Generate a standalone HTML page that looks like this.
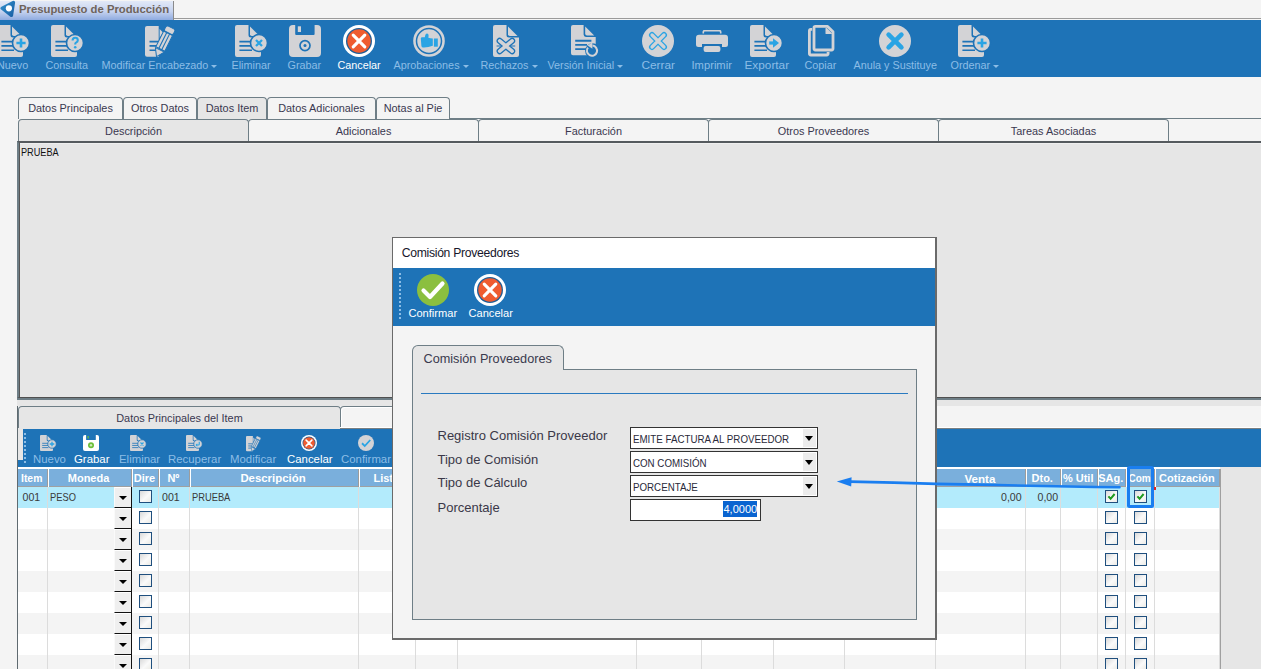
<!DOCTYPE html>
<html><head><meta charset="utf-8">
<style>
*{box-sizing:border-box;margin:0;padding:0}
html,body{width:1261px;height:669px;overflow:hidden;background:#f4f4f4;font-family:"Liberation Sans",sans-serif;position:relative}
.a{position:absolute}
.t{position:absolute;white-space:nowrap;line-height:1}
/* title tab */
#ttab{left:0;top:1px;width:174px;height:19px;background:linear-gradient(#e2e9f7,#c6d3ef 55%,#8fabe0);border-right:1px solid #8a8a8a}
#tstrip{left:174px;top:0;width:1087px;height:19px;background:#f4f4f4;border-bottom:1px solid #9a9a9a}
/* main toolbar */
#tb{left:0;top:20px;width:1261px;height:57px;background:#1e73b7}
.lbl{position:absolute;top:60.3px;font-size:10.8px;color:#8cbde6;white-space:nowrap;line-height:1}
.lbl.w{color:#fff}
.ar{display:inline-block;width:0;height:0;border-left:3px solid transparent;border-right:3px solid transparent;border-top:3px solid #8cbde6;margin-left:3px;vertical-align:1px}
/* tabs */
.tab{position:absolute;border:1px solid #6e7e86;border-bottom:none;border-radius:4px 4px 0 0;background:#f4f4f4;font-size:10.9px;color:#3a3850;text-align:center;line-height:20px;white-space:nowrap}
.tab.act{background:#e6e6e6}
.row{position:absolute;height:21px}
.cl{position:absolute;top:486px;width:1px;height:183px;background:#dedede}
.hd{position:absolute;top:468px;height:18px;background:#7aafdc;color:#fff;font-size:11.4px;line-height:18px;text-align:center;white-space:nowrap;overflow:hidden;border-right:2px solid #f4f4f4}
.cell{position:absolute;font-size:11px;color:#333;line-height:1;white-space:nowrap}
.dd{position:absolute;left:114px;width:17px;height:21px;background:#efefef;border-bottom:1.5px solid #111;border-top:1px solid #fff;border-left:1px solid #fafafa}
.dd:after{content:"";position:absolute;left:3.5px;top:8px;border-left:4px solid transparent;border-right:4px solid transparent;border-top:4px solid #000}
.cap{font-size:10.6px;color:#3a3a3a;transform:scaleX(.88);transform-origin:0 0}
.dig{font-size:10.6px;color:#3a3a3a}
.cap2{font-size:10.6px;color:#2a2a3a;transform:scaleX(.92);transform-origin:0 0}
.cb{position:absolute;width:13px;height:13px;border:1.5px solid #1f4f7e;background:linear-gradient(135deg,#d9d9d9 0%,#fafafa 55%,#ecebe6 100%)}
</style></head><body>

<!-- title -->
<div class="a" id="tstrip"></div>
<div class="a" id="ttab"></div>
<svg class="a" style="left:0;top:0" width="18" height="19" viewBox="0 0 18 19"><defs><linearGradient id="tg" x1="0" y1="0" x2="1" y2="1"><stop offset="0" stop-color="#2f8cc8"/><stop offset="1" stop-color="#1a62a8"/></linearGradient></defs><path d="M2.2 8.2 L13.4 2.6 L11.4 15.4 Z" fill="url(#tg)" stroke="url(#tg)" stroke-width="3.4" stroke-linejoin="round"/><circle cx="8.9" cy="8.3" r="3.1" fill="#fff"/></svg>
<div class="t" style="left:19px;top:3.6px;font-size:11.3px;font-weight:bold;color:#6e635b">Presupuesto de Producción</div>

<!-- toolbar -->
<div class="a" id="tb"></div>
<svg class="a" style="left:-3.1px;top:25px" width="34.00" height="33.00" viewBox="0 0 34 33"><path d="M2 0 H13.5 V10 Q13.5 12.5 16 12.5 H26 V30 Q26 32 24 32 H2 Q0 32 0 30 V2 Q0 0 2 0 Z" fill="#d3d3d6"/><path d="M15 1.5 L24.5 11 H16.8 Q15 11 15 9.2 Z" fill="#d3d3d6"/><path d="M4.4 16.6 H17 M4.4 20.9 H17 M4.4 25.2 H17" stroke="#1e73b7" stroke-width="1.6"/><circle cx="24" cy="18" r="8.5" fill="#d3d3d6" stroke="#1e73b7" stroke-width="1.6"/><path d="M24 13.4 V22.6 M19.4 18 H28.6" stroke="#2aa4e4" stroke-width="2.6"/></svg>
<svg class="a" style="left:51.1px;top:25px" width="34.00" height="33.00" viewBox="0 0 34 33"><path d="M2 0 H13.5 V10 Q13.5 12.5 16 12.5 H26 V30 Q26 32 24 32 H2 Q0 32 0 30 V2 Q0 0 2 0 Z" fill="#d3d3d6"/><path d="M15 1.5 L24.5 11 H16.8 Q15 11 15 9.2 Z" fill="#d3d3d6"/><path d="M4.4 16.6 H17 M4.4 20.9 H17 M4.4 25.2 H17" stroke="#1e73b7" stroke-width="1.6"/><circle cx="24" cy="18" r="8.5" fill="#d3d3d6" stroke="#1e73b7" stroke-width="1.6"/><path d="M21.6 15.6 Q21.6 12.8 24.2 12.8 Q26.8 12.8 26.8 15.2 Q26.8 16.8 25 17.6 Q24.2 18 24.2 19.6" stroke="#2aa4e4" stroke-width="2.1" fill="none"/><circle cx="24.2" cy="22.2" r="1.3" fill="#2aa4e4"/></svg>
<svg class="a" style="left:144.5px;top:26px" width="32.00" height="32.00" viewBox="0 0 32 32"><path d="M2 0 H13.7 V30.7 H2 Q0 30.7 0 28.7 V2 Q0 0 2 0 Z" fill="#d3d3d6"/><path d="M14.6 3 L18 6.4 L14.6 12 Z" fill="#d3d3d6"/><path d="M4.5 15.6 H13.5 M4.5 19.9 H13.5 M4.5 24.2 H13.5" stroke="#1e73b7" stroke-width="1.6"/><g transform="translate(25.6 2.4) rotate(26.6)"><rect x="-5" y="-1" width="10" height="6" rx="2" fill="#d3d3d6" stroke="#1e73b7" stroke-width="1"/><rect x="-5" y="5.6" width="10" height="17.4" fill="#d3d3d6" stroke="#1e73b7" stroke-width="1"/><path d="M-1.6 5.6 V23 M1.6 5.6 V23" stroke="#1e73b7" stroke-width="1.1"/><path d="M-5 24 H5 L0 31.5 Z" fill="#d3d3d6" stroke="#1e73b7" stroke-width="1" stroke-linejoin="round"/></g></svg>
<svg class="a" style="left:235.2px;top:25px" width="34.00" height="33.00" viewBox="0 0 34 33"><path d="M2 0 H13.5 V10 Q13.5 12.5 16 12.5 H26 V30 Q26 32 24 32 H2 Q0 32 0 30 V2 Q0 0 2 0 Z" fill="#d3d3d6"/><path d="M15 1.5 L24.5 11 H16.8 Q15 11 15 9.2 Z" fill="#d3d3d6"/><path d="M4.4 16.6 H17 M4.4 20.9 H17 M4.4 25.2 H17" stroke="#1e73b7" stroke-width="1.6"/><circle cx="24" cy="18" r="8.5" fill="#d3d3d6" stroke="#1e73b7" stroke-width="1.6"/><path d="M21 15 L27 21 M27 15 L21 21" stroke="#2aa4e4" stroke-width="2.3"/></svg>
<svg class="a" style="left:289px;top:25px" width="32.00" height="32.00" viewBox="0 0 32 32"><path d="M4 0 H6.2 V9 Q6.2 10 7.2 10 H24.6 Q25.6 10 25.6 9 V0 H28 Q32 0 32 4 V28 Q32 32 28 32 H4 Q0 32 0 28 V4 Q0 0 4 0 Z" fill="#d3d3d6"/><rect x="8.8" y="1.3" width="3.2" height="5.7" fill="#d3d3d6"/><circle cx="16" cy="20.6" r="5" fill="none" stroke="#1e73b7" stroke-width="1.7"/><circle cx="16" cy="20.6" r="1.5" fill="#1e73b7"/></svg>
<svg class="a" style="left:343px;top:25px" width="32.00" height="32.00" viewBox="0 0 32 32"><circle cx="16" cy="16" r="16" fill="#fff"/><circle cx="16" cy="16" r="13" fill="#1d5e98"/><circle cx="16" cy="16" r="11.7" fill="#ef5c30"/><path d="M10.2 10.2 L21.8 21.8 M21.8 10.2 L10.2 21.8" stroke="#fff" stroke-width="3.1" stroke-linecap="round"/></svg>
<svg class="a" style="left:413px;top:25px" width="32.00" height="32.00" viewBox="0 0 32 32"><circle cx="16" cy="16" r="15.8" fill="#d3d3d6"/><circle cx="16" cy="16" r="12.5" fill="none" stroke="#1e73b7" stroke-width="1.5"/><path d="M7.8 13.6 Q7.8 12.3 9.2 12.3 H11.8 L12.2 10.4 Q12.6 8.6 14 8.6 Q15.6 8.8 15.6 10.6 L15.4 12.8 Q17.2 13.2 19.8 13.6 V20.8 Q15 22.8 10.2 22.6 Q8.6 22.6 8.4 21 Z" fill="#2aa4e4"/><rect x="20.9" y="13.5" width="3.9" height="8.2" fill="#2aa4e4"/></svg>
<svg class="a" style="left:493.4px;top:25px" width="27.00" height="33.00" viewBox="0 0 27 33"><path d="M2 0 H13.5 V10 Q13.5 12.5 16 12.5 H26 V30 Q26 32 24 32 H2 Q0 32 0 30 V2 Q0 0 2 0 Z" fill="#d3d3d6"/><path d="M15 1.5 L24.5 11 H16.8 Q15 11 15 9.2 Z" fill="#d3d3d6"/><path d="M6.7 15.8 L19.1 26.2 M19.1 15.8 L6.7 26.2" stroke="#1e73b7" stroke-width="6.2" stroke-linecap="round"/><path d="M6.7 15.8 L19.1 26.2 M19.1 15.8 L6.7 26.2" stroke="#d3d3d6" stroke-width="3.6" stroke-linecap="round"/><path d="M3.6 21 H8.4 M17.4 21 H22.2" stroke="#1e73b7" stroke-width="1.2"/></svg>
<svg class="a" style="left:571.3px;top:25px" width="30.00" height="34.00" viewBox="0 0 30 34"><path d="M2 0 H12.6 V9.6 Q12.6 12 15 12 H24.7 V28.2 Q24.7 30.2 22.7 30.2 H2 Q0 30.2 0 28.2 V2 Q0 0 2 0 Z" fill="#d3d3d6"/><path d="M14.2 1.6 L23.2 10.6 H16 Q14.2 10.6 14.2 8.8 Z" fill="#d3d3d6"/><path d="M4.2 15.75 H20.4 M4.2 19.9 H16 M4.2 24.2 H16" stroke="#1e73b7" stroke-width="1.8"/><circle cx="21.5" cy="25.7" r="7.4" fill="#1e73b7"/><path d="M16.9 22.6 A5.1 5.1 0 1 0 21.5 20.6" stroke="#d3d3d6" stroke-width="2" fill="none"/><path d="M21.4 17.2 L21.4 23.8 L16.6 20.4 Z" fill="#d3d3d6"/></svg>
<svg class="a" style="left:642px;top:25px" width="32.00" height="32.00" viewBox="0 0 32 32"><circle cx="16" cy="16" r="16" fill="#d3d3d6"/><path d="M10 10 L22 22 M22 10 L10 22" stroke="#2aa4e4" stroke-width="6" stroke-linecap="round"/><path d="M10 10 L22 22 M22 10 L10 22" stroke="#d3d3d6" stroke-width="3.2" stroke-linecap="round"/></svg>
<svg class="a" style="left:696px;top:30px" width="32.00" height="23.00" viewBox="0 0 32 23"><path d="M7.3 3.6 V2 Q7.3 0.6 8.7 0.6 H23.3 Q24.7 0.6 24.7 2 V3.6" stroke="#d3d3d6" stroke-width="1.6" fill="none"/><path d="M3 4.8 H29 Q32 4.8 32 7.8 V14.5 Q32 17 29.5 17 H26 V13.9 H6 V17 H2.5 Q0 17 0 14.5 V7.8 Q0 4.8 3 4.8 Z" fill="#d3d3d6"/><rect x="7.6" y="15.9" width="16.8" height="6.2" rx="2" fill="#d3d3d6"/></svg>
<svg class="a" style="left:749.8px;top:25px" width="34.00" height="33.00" viewBox="0 0 34 33"><path d="M2 0 H13.5 V10 Q13.5 12.5 16 12.5 H26 V30 Q26 32 24 32 H2 Q0 32 0 30 V2 Q0 0 2 0 Z" fill="#d3d3d6"/><path d="M15 1.5 L24.5 11 H16.8 Q15 11 15 9.2 Z" fill="#d3d3d6"/><path d="M4.4 16.6 H17 M4.4 20.9 H17 M4.4 25.2 H17" stroke="#1e73b7" stroke-width="1.6"/><circle cx="24" cy="18" r="8.5" fill="#d3d3d6" stroke="#1e73b7" stroke-width="1.6"/><path d="M19.2 18 H24" stroke="#2aa4e4" stroke-width="3.2"/><path d="M23 13.2 L29 18 L23 22.8 Z" fill="#2aa4e4"/></svg>
<svg class="a" style="left:807.6px;top:25.4px" width="27.00" height="32.00" viewBox="0 0 27 32"><path d="M4.2 4.3 H2.8 Q1.4 4.3 1.4 5.8 V28.6 Q1.4 30 2.8 30 H18.6 Q20.1 30 20.1 28.6 V27" stroke="#d3d3d6" stroke-width="2.8" fill="none"/><path d="M7.4 1.4 H19.6 L25 6.8 V23.6 Q25 25 23.6 25 H7.4 Q6 25 6 23.6 V2.8 Q6 1.4 7.4 1.4 Z" fill="#1e73b7" stroke="#d3d3d6" stroke-width="2.8" stroke-linejoin="round"/><path d="M18.2 3.4 V8.4 H23.2 Z" fill="#d3d3d6" stroke="#d3d3d6" stroke-width="1.4" stroke-linejoin="round"/></svg>
<svg class="a" style="left:878.8px;top:25px" width="32.00" height="32.00" viewBox="0 0 32 32"><circle cx="16" cy="16" r="16" fill="#d3d3d6"/><path d="M9.6 9.6 L22.4 22.4 M22.4 9.6 L9.6 22.4" stroke="#2aa4e4" stroke-width="4.6" stroke-linecap="round"/></svg>
<svg class="a" style="left:958px;top:25px" width="34.00" height="33.00" viewBox="0 0 34 33"><path d="M2 0 H13.5 V10 Q13.5 12.5 16 12.5 H26 V30 Q26 32 24 32 H2 Q0 32 0 30 V2 Q0 0 2 0 Z" fill="#d3d3d6"/><path d="M15 1.5 L24.5 11 H16.8 Q15 11 15 9.2 Z" fill="#d3d3d6"/><path d="M4.4 16.6 H17 M4.4 20.9 H17 M4.4 25.2 H17" stroke="#1e73b7" stroke-width="1.6"/><circle cx="24" cy="18" r="8.5" fill="#d3d3d6" stroke="#1e73b7" stroke-width="1.6"/><path d="M24 13.4 V22.6 M19.4 18 H28.6" stroke="#2aa4e4" stroke-width="2.6"/></svg>
<div class="lbl" style="left:-3px">Nuevo</div>
<div class="lbl" style="left:45.5px">Consulta</div>
<div class="lbl" style="left:101.5px">Modificar Encabezado<i class="ar"></i></div>
<div class="lbl" style="left:231.5px">Eliminar</div>
<div class="lbl" style="left:287.5px">Grabar</div>
<div class="lbl w" style="left:337.5px">Cancelar</div>
<div class="lbl" style="left:393.5px">Aprobaciones<i class="ar"></i></div>
<div class="lbl" style="left:480.5px">Rechazos<i class="ar"></i></div>
<div class="lbl" style="left:547.5px">Versión Inicial<i class="ar"></i></div>
<div class="lbl" style="left:641.5px;font-size:11.8px;top:59.5px">Cerrar</div>
<div class="lbl" style="left:691.5px;font-size:11.2px;top:60px">Imprimir</div>
<div class="lbl" style="left:744.5px;font-size:11.8px;top:59.5px">Exportar</div>
<div class="lbl" style="left:804.5px">Copiar</div>
<div class="lbl" style="left:853.5px">Anula y Sustituye</div>
<div class="lbl" style="left:950.5px">Ordenar<i class="ar"></i></div>

<!-- top tabs -->
<div class="a" style="left:18px;top:118px;width:1243px;height:1px;background:#6e7e86"></div>
<div class="tab" style="left:18px;top:97px;width:105px;height:22px">Datos Principales</div>
<div class="tab" style="left:123px;top:97px;width:74px;height:22px">Otros Datos</div>
<div class="tab act" style="left:197px;top:97px;width:70px;height:22px">Datos Item</div>
<div class="tab" style="left:267px;top:97px;width:109px;height:22px">Datos Adicionales</div>
<div class="tab" style="left:376px;top:97px;width:74px;height:22px">Notas al Pie</div>

<div class="tab act" style="left:18px;top:119px;width:231px;height:23px;line-height:22px">Descripción</div>
<div class="tab" style="left:248px;top:119px;width:231px;height:23px;line-height:22px">Adicionales</div>
<div class="tab" style="left:478px;top:119px;width:231px;height:23px;line-height:22px">Facturación</div>
<div class="tab" style="left:708px;top:119px;width:231px;height:23px;line-height:22px">Otros Proveedores</div>
<div class="tab" style="left:938px;top:119px;width:231px;height:23px;line-height:22px">Tareas Asociadas</div>

<!-- content -->
<div class="a" style="left:17px;top:141px;width:1244px;height:257px;background:#e6e6e6;border-top:2px solid #555a5e;border-left:2px solid #6e7e86;border-bottom:1px solid #505050"></div>
<div class="a" style="left:19px;top:143px;width:1px;height:254px;background:#555"></div>
<div class="a" style="left:20px;top:143px;width:1241px;height:1px;background:#efefef"></div>
<div class="a" style="left:17px;top:398px;width:1244px;height:2px;background:#6e7e86"></div>
<div class="t" style="left:21px;top:147px;font-size:10.6px;color:#111;transform:scaleX(.865);transform-origin:0 0">PRUEBA</div>

<!-- lower area -->
<div class="a" style="left:17px;top:400px;width:1244px;height:6px;background:#e6e6e6"></div>
<div class="tab act" style="left:18px;top:406px;width:323px;height:23px;line-height:23px">Datos Principales del Item</div>
<div class="a" style="left:340px;top:406px;width:323px;height:22px;background:#f4f4f4;border:1px solid #6e7e86;border-bottom:none;border-radius:4px 4px 0 0;box-shadow:inset 1px 1px 0 #fff"></div>
<div class="a" style="left:340px;top:427px;width:921px;height:1px;background:#fff"></div>
<div class="a" style="left:340px;top:428px;width:921px;height:1px;background:#7a7f82"></div>

<div class="a" style="left:23px;top:428.8px;width:1238px;height:38.2px;background:#1e73b7"></div>
<div class="a" style="left:18px;top:428px;width:5px;height:32px;background:#e6e6e6"></div>
<div class="a" style="left:18px;top:459.6px;width:6px;height:7.4px;background:#1e73b7"></div>
<div class="a" style="left:24px;top:433px;width:2px;height:32px;background:repeating-linear-gradient(#8cbde6 0 2px,transparent 2px 4px)"></div>
<svg class="a" style="left:40px;top:435px" width="17.00" height="16.50" viewBox="0 0 34 33"><path d="M2 0 H13.5 V10 Q13.5 12.5 16 12.5 H26 V30 Q26 32 24 32 H2 Q0 32 0 30 V2 Q0 0 2 0 Z" fill="#d3d3d6"/><path d="M15 1.5 L24.5 11 H16.8 Q15 11 15 9.2 Z" fill="#d3d3d6"/><path d="M4.4 16.6 H17 M4.4 20.9 H17 M4.4 25.2 H17" stroke="#1e73b7" stroke-width="1.6"/><circle cx="24" cy="18" r="8.5" fill="#d3d3d6" stroke="#1e73b7" stroke-width="1.6"/><path d="M24 13.4 V22.6 M19.4 18 H28.6" stroke="#2aa4e4" stroke-width="2.6"/></svg>
<svg class="a" style="left:83px;top:435px" width="16.00" height="16.00" viewBox="0 0 32 32"><path d="M4 0 H6.2 V9 Q6.2 10 7.2 10 H24.6 Q25.6 10 25.6 9 V0 H28 Q32 0 32 4 V28 Q32 32 28 32 H4 Q0 32 0 28 V4 Q0 0 4 0 Z" fill="#ffffff"/><rect x="9" y="2" width="2.6" height="5" fill="#6cbf3a"/><circle cx="16" cy="20.6" r="6" fill="#6cbf3a"/><circle cx="16" cy="20.6" r="2.4" fill="#cfe9b8"/></svg>
<svg class="a" style="left:130px;top:435px" width="17.00" height="16.50" viewBox="0 0 34 33"><path d="M2 0 H13.5 V10 Q13.5 12.5 16 12.5 H26 V30 Q26 32 24 32 H2 Q0 32 0 30 V2 Q0 0 2 0 Z" fill="#d3d3d6"/><path d="M15 1.5 L24.5 11 H16.8 Q15 11 15 9.2 Z" fill="#d3d3d6"/><path d="M4.4 16.6 H17 M4.4 20.9 H17 M4.4 25.2 H17" stroke="#1e73b7" stroke-width="1.6"/><circle cx="24" cy="18" r="8.5" fill="#d3d3d6" stroke="#1e73b7" stroke-width="1.6"/><path d="M21 15 L27 21 M27 15 L21 21" stroke="#2aa4e4" stroke-width="2.3"/></svg>
<svg class="a" style="left:186.1px;top:435px" width="17.00" height="16.50" viewBox="0 0 34 33"><path d="M2 0 H13.5 V10 Q13.5 12.5 16 12.5 H26 V30 Q26 32 24 32 H2 Q0 32 0 30 V2 Q0 0 2 0 Z" fill="#d3d3d6"/><path d="M15 1.5 L24.5 11 H16.8 Q15 11 15 9.2 Z" fill="#d3d3d6"/><path d="M4.4 16.6 H17 M4.4 20.9 H17 M4.4 25.2 H17" stroke="#1e73b7" stroke-width="1.6"/><circle cx="24" cy="18" r="8.5" fill="#d3d3d6" stroke="#1e73b7" stroke-width="1.6"/><path d="M26.5 13.5 V18.5 Q26.5 20 25 20 H21" stroke="#2aa4e4" stroke-width="2.2" fill="none"/><path d="M22.5 16.5 L19 20 L22.5 23.5 Z" fill="#2aa4e4"/></svg>
<svg class="a" style="left:246.1px;top:435.5px" width="16.00" height="16.00" viewBox="0 0 32 32"><path d="M2 0 H13.7 V30.7 H2 Q0 30.7 0 28.7 V2 Q0 0 2 0 Z" fill="#d3d3d6"/><path d="M14.6 3 L18 6.4 L14.6 12 Z" fill="#d3d3d6"/><path d="M4.5 15.6 H13.5 M4.5 19.9 H13.5 M4.5 24.2 H13.5" stroke="#1e73b7" stroke-width="1.6"/><g transform="translate(25.6 2.4) rotate(26.6)"><rect x="-5" y="-1" width="10" height="6" rx="2" fill="#d3d3d6" stroke="#1e73b7" stroke-width="1"/><rect x="-5" y="5.6" width="10" height="17.4" fill="#d3d3d6" stroke="#1e73b7" stroke-width="1"/><path d="M-1.6 5.6 V23 M1.6 5.6 V23" stroke="#1e73b7" stroke-width="1.1"/><path d="M-5 24 H5 L0 31.5 Z" fill="#d3d3d6" stroke="#1e73b7" stroke-width="1" stroke-linejoin="round"/></g></svg>
<svg class="a" style="left:301.1px;top:435px" width="16.00" height="16.00" viewBox="0 0 32 32"><circle cx="16" cy="16" r="16" fill="#fff"/><circle cx="16" cy="16" r="13" fill="#1d5e98"/><circle cx="16" cy="16" r="11.7" fill="#ef5c30"/><path d="M10.2 10.2 L21.8 21.8 M21.8 10.2 L10.2 21.8" stroke="#fff" stroke-width="3.1" stroke-linecap="round"/></svg>
<svg class="a" style="left:357.7px;top:435px" width="16.00" height="16.00" viewBox="0 0 32 32"><circle cx="16" cy="16" r="16" fill="#d3d3d6"/><path d="M8 16.5 L13.5 22 L24.5 10" stroke="#2aa4e4" stroke-width="3.6" fill="none"/></svg>
<div class="t" style="left:33px;top:453.6px;font-size:11.4px;color:#8cbde6">Nuevo</div>
<div class="t" style="left:74px;top:453.6px;font-size:11.4px;color:#fff">Grabar</div>
<div class="t" style="left:119px;top:453.6px;font-size:11.4px;color:#8cbde6">Eliminar</div>
<div class="t" style="left:168px;top:453.6px;font-size:11.4px;color:#8cbde6">Recuperar</div>
<div class="t" style="left:230px;top:453.6px;font-size:11.4px;color:#8cbde6">Modificar</div>
<div class="t" style="left:287px;top:453.6px;font-size:11.4px;color:#fff">Cancelar</div>
<div class="t" style="left:341px;top:453.6px;font-size:11.4px;color:#8cbde6">Confirmar</div>

<!-- grid -->
<div class="a" style="left:18px;top:467px;width:1202px;height:202px;background:#fff"></div>
<div class="a" style="left:1220px;top:467px;width:41px;height:202px;background:#e6e6e6"></div>
<div class="a" style="left:18px;top:486.5px;width:1202px;height:21px;background:#b3ebfc"></div>
<div class="a" style="left:18px;top:507.5px;width:1202px;height:21px;background:#ffffff"></div>
<div class="a" style="left:18px;top:528.5px;width:1202px;height:21px;background:#f4f4f4"></div>
<div class="a" style="left:18px;top:549.5px;width:1202px;height:21px;background:#ffffff"></div>
<div class="a" style="left:18px;top:570.5px;width:1202px;height:21px;background:#f4f4f4"></div>
<div class="a" style="left:18px;top:591.5px;width:1202px;height:21px;background:#ffffff"></div>
<div class="a" style="left:18px;top:612.5px;width:1202px;height:21px;background:#f4f4f4"></div>
<div class="a" style="left:18px;top:633.5px;width:1202px;height:21px;background:#ffffff"></div>
<div class="a" style="left:18px;top:654.5px;width:1202px;height:21px;background:#f4f4f4"></div>
<div class="a" style="left:46.5px;top:486px;width:1px;height:183px;background:#dcdcdc"></div>
<div class="a" style="left:130.6px;top:486px;width:1px;height:183px;background:#dcdcdc"></div>
<div class="a" style="left:158.3px;top:486px;width:1px;height:183px;background:#dcdcdc"></div>
<div class="a" style="left:188.5px;top:486px;width:1px;height:183px;background:#dcdcdc"></div>
<div class="a" style="left:357.5px;top:486px;width:1px;height:183px;background:#dcdcdc"></div>
<div class="a" style="left:415.1px;top:486px;width:1px;height:183px;background:#dcdcdc"></div>
<div class="a" style="left:456.5px;top:486px;width:1px;height:183px;background:#dcdcdc"></div>
<div class="a" style="left:635.5px;top:486px;width:1px;height:183px;background:#dcdcdc"></div>
<div class="a" style="left:700.7px;top:486px;width:1px;height:183px;background:#dcdcdc"></div>
<div class="a" style="left:772.6px;top:486px;width:1px;height:183px;background:#dcdcdc"></div>
<div class="a" style="left:844.4px;top:486px;width:1px;height:183px;background:#dcdcdc"></div>
<div class="a" style="left:935.0px;top:486px;width:1px;height:183px;background:#dcdcdc"></div>
<div class="a" style="left:1024.8px;top:486px;width:1px;height:183px;background:#dcdcdc"></div>
<div class="a" style="left:1059.7px;top:486px;width:1px;height:183px;background:#dcdcdc"></div>
<div class="a" style="left:1096.7px;top:486px;width:1px;height:183px;background:#dcdcdc"></div>
<div class="a" style="left:1124.8px;top:486px;width:1px;height:183px;background:#dcdcdc"></div>
<div class="a" style="left:1154.4px;top:486px;width:1px;height:183px;background:#dcdcdc"></div>
<div class="a" style="left:1219.4px;top:486px;width:1px;height:183px;background:#dcdcdc"></div>
<div class="a" style="left:18px;top:469px;width:1202px;height:17.5px;background:#7aafdc"></div>
<div class="a" style="left:18px;top:486px;width:1202px;height:1px;background:#a0a0a0"></div>
<div class="a" style="left:46.5px;top:469px;width:1px;height:17.5px;background:#9c9c9c"></div>
<div class="a" style="left:47.5px;top:469px;width:1px;height:17.5px;background:#ffffff"></div>
<div class="t" style="left:18.0px;top:473.8px;width:27.5px;padding-left:3px;text-align:left;font-size:10.4px;font-weight:bold;color:#fff;overflow:hidden">Item</div>
<div class="a" style="left:130.6px;top:469px;width:1px;height:17.5px;background:#9c9c9c"></div>
<div class="a" style="left:131.6px;top:469px;width:1px;height:17.5px;background:#ffffff"></div>
<div class="t" style="left:47.5px;top:473px;width:82.1px;text-align:center;font-size:11px;font-weight:bold;color:#fff;overflow:hidden">Moneda</div>
<div class="a" style="left:158.3px;top:469px;width:1px;height:17.5px;background:#9c9c9c"></div>
<div class="a" style="left:159.3px;top:469px;width:1px;height:17.5px;background:#ffffff"></div>
<div class="t" style="left:131.6px;top:473px;width:25.7px;text-align:center;font-size:11px;font-weight:bold;color:#fff;overflow:hidden">Dire</div>
<div class="a" style="left:188.5px;top:469px;width:1px;height:17.5px;background:#9c9c9c"></div>
<div class="a" style="left:189.5px;top:469px;width:1px;height:17.5px;background:#ffffff"></div>
<div class="t" style="left:159.3px;top:473px;width:28.2px;text-align:center;font-size:11px;font-weight:bold;color:#fff;overflow:hidden">Nº</div>
<div class="a" style="left:357.5px;top:469px;width:1px;height:17.5px;background:#9c9c9c"></div>
<div class="a" style="left:358.5px;top:469px;width:1px;height:17.5px;background:#ffffff"></div>
<div class="t" style="left:189.5px;top:473px;width:167.0px;text-align:center;font-size:11.4px;font-weight:bold;color:#fff;overflow:hidden">Descripción</div>
<div class="a" style="left:415.1px;top:469px;width:1px;height:17.5px;background:#9c9c9c"></div>
<div class="a" style="left:416.1px;top:469px;width:1px;height:17.5px;background:#ffffff"></div>
<div class="t" style="left:358.5px;top:473px;width:55.6px;text-align:center;font-size:11px;font-weight:bold;color:#fff;overflow:hidden">Lista</div>
<div class="a" style="left:456.5px;top:469px;width:1px;height:17.5px;background:#9c9c9c"></div>
<div class="a" style="left:457.5px;top:469px;width:1px;height:17.5px;background:#ffffff"></div>
<div class="a" style="left:635.5px;top:469px;width:1px;height:17.5px;background:#9c9c9c"></div>
<div class="a" style="left:636.5px;top:469px;width:1px;height:17.5px;background:#ffffff"></div>
<div class="a" style="left:700.7px;top:469px;width:1px;height:17.5px;background:#9c9c9c"></div>
<div class="a" style="left:701.7px;top:469px;width:1px;height:17.5px;background:#ffffff"></div>
<div class="a" style="left:772.6px;top:469px;width:1px;height:17.5px;background:#9c9c9c"></div>
<div class="a" style="left:773.6px;top:469px;width:1px;height:17.5px;background:#ffffff"></div>
<div class="a" style="left:844.4px;top:469px;width:1px;height:17.5px;background:#9c9c9c"></div>
<div class="a" style="left:845.4px;top:469px;width:1px;height:17.5px;background:#ffffff"></div>
<div class="a" style="left:935.0px;top:469px;width:1px;height:17.5px;background:#9c9c9c"></div>
<div class="a" style="left:936.0px;top:469px;width:1px;height:17.5px;background:#ffffff"></div>
<div class="a" style="left:1024.8px;top:469px;width:1px;height:17.5px;background:#9c9c9c"></div>
<div class="a" style="left:1025.8px;top:469px;width:1px;height:17.5px;background:#ffffff"></div>
<div class="t" style="left:936.0px;top:473px;width:87.8px;text-align:center;font-size:11.6px;font-weight:bold;color:#fff;overflow:hidden">Venta</div>
<div class="a" style="left:1059.7px;top:469px;width:1px;height:17.5px;background:#9c9c9c"></div>
<div class="a" style="left:1060.7px;top:469px;width:1px;height:17.5px;background:#ffffff"></div>
<div class="t" style="left:1025.8px;top:473px;width:32.9px;text-align:center;font-size:11px;font-weight:bold;color:#fff;overflow:hidden">Dto.</div>
<div class="a" style="left:1096.7px;top:469px;width:1px;height:17.5px;background:#9c9c9c"></div>
<div class="a" style="left:1097.7px;top:469px;width:1px;height:17.5px;background:#ffffff"></div>
<div class="t" style="left:1060.7px;top:473px;width:35.0px;text-align:center;font-size:11px;font-weight:bold;color:#fff;overflow:hidden">% Util</div>
<div class="a" style="left:1124.8px;top:469px;width:1px;height:17.5px;background:#9c9c9c"></div>
<div class="a" style="left:1125.8px;top:469px;width:1px;height:17.5px;background:#ffffff"></div>
<div class="t" style="left:1097.7px;top:473px;width:26.1px;text-align:center;font-size:11px;font-weight:bold;color:#fff;overflow:hidden">SAg.</div>
<div class="a" style="left:1154.4px;top:469px;width:1px;height:17.5px;background:#9c9c9c"></div>
<div class="a" style="left:1155.4px;top:469px;width:1px;height:17.5px;background:#ffffff"></div>
<div class="t" style="left:1125.8px;top:473.8px;width:27.6px;text-align:center;font-size:10px;font-weight:bold;color:#fff;overflow:hidden">Com</div>
<div class="a" style="left:1219.4px;top:469px;width:1px;height:17.5px;background:#9c9c9c"></div>
<div class="a" style="left:1220.4px;top:469px;width:1px;height:17.5px;background:#ffffff"></div>
<div class="t" style="left:1155.4px;top:473px;width:63.0px;text-align:center;font-size:11px;font-weight:bold;color:#fff;overflow:hidden">Cotización</div>
<div class="a" style="left:1220px;top:468.5px;width:1px;height:201px;background:#a0a0a0"></div>
<div class="a" style="left:130.8px;top:486.5px;width:1.2px;height:183px;background:#111"></div>
<div class="a" style="left:17px;top:406px;width:1px;height:263px;background:#5f6a70"></div>
<div class="dd" style="top:486.5px"></div>
<div class="cb" style="left:139px;top:490.0px"></div>
<div class="cb" style="left:1105px;top:490.0px"></div>
<div class="cb" style="left:1134px;top:490.0px"></div>
<div class="dd" style="top:507.5px"></div>
<div class="cb" style="left:139px;top:511.0px"></div>
<div class="cb" style="left:1105px;top:511.0px"></div>
<div class="cb" style="left:1134px;top:511.0px"></div>
<div class="dd" style="top:528.5px"></div>
<div class="cb" style="left:139px;top:532.0px"></div>
<div class="cb" style="left:1105px;top:532.0px"></div>
<div class="cb" style="left:1134px;top:532.0px"></div>
<div class="dd" style="top:549.5px"></div>
<div class="cb" style="left:139px;top:553.0px"></div>
<div class="cb" style="left:1105px;top:553.0px"></div>
<div class="cb" style="left:1134px;top:553.0px"></div>
<div class="dd" style="top:570.5px"></div>
<div class="cb" style="left:139px;top:574.0px"></div>
<div class="cb" style="left:1105px;top:574.0px"></div>
<div class="cb" style="left:1134px;top:574.0px"></div>
<div class="dd" style="top:591.5px"></div>
<div class="cb" style="left:139px;top:595.0px"></div>
<div class="cb" style="left:1105px;top:595.0px"></div>
<div class="cb" style="left:1134px;top:595.0px"></div>
<div class="dd" style="top:612.5px"></div>
<div class="cb" style="left:139px;top:616.0px"></div>
<div class="cb" style="left:1105px;top:616.0px"></div>
<div class="cb" style="left:1134px;top:616.0px"></div>
<div class="dd" style="top:633.5px"></div>
<div class="cb" style="left:139px;top:637.0px"></div>
<div class="cb" style="left:1105px;top:637.0px"></div>
<div class="cb" style="left:1134px;top:637.0px"></div>
<div class="dd" style="top:654.5px"></div>
<div class="cb" style="left:139px;top:658.0px"></div>
<div class="cb" style="left:1105px;top:658.0px"></div>
<div class="cb" style="left:1134px;top:658.0px"></div>
<div class="t dig" style="left:22.5px;top:492px">001</div>
<div class="t cap" style="left:50px;top:492px">PESO</div>
<div class="t dig" style="left:162px;top:492px">001</div>
<div class="t cap" style="left:192px;top:492px">PRUEBA</div>
<div class="t dig" style="left:1001px;top:492px">0,00</div>
<div class="t dig" style="left:1037.5px;top:492px">0,00</div>
<svg class="a" style="left:1105px;top:490px" width="13" height="13"><path d="M3.4 6.4 L5.6 8.8 L9.6 4" stroke="#1f9a1f" stroke-width="2" fill="none"/></svg>
<svg class="a" style="left:1134px;top:490px" width="13" height="13"><path d="M3.4 6.4 L5.6 8.8 L9.6 4" stroke="#1f9a1f" stroke-width="2" fill="none"/></svg>
<div class="a" style="left:392px;top:237px;width:545px;height:403px;background:#f4f4f4;border:1px solid #6a6a6a;border-right:2px solid #6a6a6a;border-bottom:2px solid #6a6a6a"></div>
<div class="a" style="left:393px;top:238px;width:542px;height:30px;background:#fff"></div>
<div class="t" style="left:401.7px;top:246.6px;font-size:12.2px;letter-spacing:-0.3px;color:#16162a">Comisión Proveedores</div>
<div class="a" style="left:393px;top:268px;width:542px;height:58px;background:#1e73b7"></div>
<div class="a" style="left:399px;top:273px;width:2px;height:46px;background:repeating-linear-gradient(#8cbde6 0 2px,transparent 2px 4px)"></div>
<svg class="a" style="left:417px;top:274px" width="32" height="32" viewBox="0 0 32 32"><circle cx="16" cy="16" r="16" fill="#8bbf3f"/><path d="M6.5 16.5 L13 23 L25.5 9.5" stroke="#fff" stroke-width="4.2" fill="none" stroke-linecap="round" stroke-linejoin="round"/></svg>
<svg class="a" style="left:474px;top:274px" width="32.00" height="32.00" viewBox="0 0 32 32"><circle cx="16" cy="16" r="16" fill="#fff"/><circle cx="16" cy="16" r="13" fill="#1d5e98"/><circle cx="16" cy="16" r="11.7" fill="#ef5c30"/><path d="M10.2 10.2 L21.8 21.8 M21.8 10.2 L10.2 21.8" stroke="#fff" stroke-width="3.1" stroke-linecap="round"/></svg>
<div class="t" style="left:408.4px;top:308px;font-size:11.1px;color:#fff">Confirmar</div>
<div class="t" style="left:468.5px;top:308px;font-size:11.1px;color:#fff">Cancelar</div>
<div class="a" style="left:412px;top:369px;width:505px;height:251px;background:#e6e6e6;border:1px solid #6e7e86"></div>
<div class="a" style="left:412px;top:345px;width:152px;height:25px;background:#e6e6e6;border:1px solid #6e7e86;border-bottom:none;border-radius:6px 6px 0 0"></div>
<div class="t" style="left:423.5px;top:353px;font-size:12.7px;color:#3a3a4e">Comisión Proveedores</div>
<div class="a" style="left:421px;top:393px;width:487px;height:1px;background:#2a7ac0"></div>
<div class="t" style="left:437.5px;top:429.1px;font-size:13px;color:#3a3848">Registro Comisión Proveedor</div>
<div class="t" style="left:437.5px;top:452.6px;font-size:13px;color:#3a3848">Tipo de Comisión</div>
<div class="t" style="left:437.5px;top:476.4px;font-size:13px;color:#3a3848">Tipo de Cálculo</div>
<div class="t" style="left:437.5px;top:500.7px;font-size:13px;color:#3a3848">Porcentaje</div>
<div class="a" style="left:630px;top:427px;width:188px;height:22px;background:#fff;border:1.5px solid #333"></div>
<div class="a" style="left:803px;top:429px;width:13px;height:18px;background:#ececec"></div>
<div class="a" style="left:805px;top:435.5px;border-left:4.5px solid transparent;border-right:4.5px solid transparent;border-top:5px solid #000;width:0;height:0"></div>
<div class="t cap2" style="left:633.3px;top:434px">EMITE FACTURA AL PROVEEDOR</div>
<div class="a" style="left:630px;top:451px;width:188px;height:22px;background:#fff;border:1.5px solid #333"></div>
<div class="a" style="left:803px;top:453px;width:13px;height:18px;background:#ececec"></div>
<div class="a" style="left:805px;top:459.5px;border-left:4.5px solid transparent;border-right:4.5px solid transparent;border-top:5px solid #000;width:0;height:0"></div>
<div class="t cap2" style="left:633.3px;top:458px">CON COMISIÓN</div>
<div class="a" style="left:630px;top:475px;width:188px;height:22px;background:#fff;border:1.5px solid #333"></div>
<div class="a" style="left:803px;top:477px;width:13px;height:18px;background:#ececec"></div>
<div class="a" style="left:805px;top:483.5px;border-left:4.5px solid transparent;border-right:4.5px solid transparent;border-top:5px solid #000;width:0;height:0"></div>
<div class="t cap2" style="left:633.3px;top:482px">PORCENTAJE</div>
<div class="a" style="left:630px;top:499px;width:131px;height:22px;background:#fff;border:1.5px solid #333"></div>
<div class="a" style="left:723px;top:501px;width:34px;height:15.6px;background:#0a64d0"></div>
<div class="t" style="left:723.5px;top:503.5px;font-size:11px;color:#fff">4,0000</div>
<div class="a" style="left:1126.5px;top:466.2px;width:27.5px;height:42.3px;border:3px solid #1a7ef0;border-radius:2.5px"></div>
<div class="a" style="left:1154px;top:487px;width:1.5px;height:3px;background:#e02020"></div>
<svg class="a" style="left:830px;top:470px" width="300" height="30" viewBox="830 470 300 30"><path d="M1119.5 487.3 Q1000 485.5 850 481.6" stroke="#1a7ef0" stroke-width="2.6" fill="none" stroke-linecap="round"/><path d="M836.8 481.4 L851.6 477.2 L851.2 486.4 Z" fill="#1a7ef0"/></svg>

</body></html>
